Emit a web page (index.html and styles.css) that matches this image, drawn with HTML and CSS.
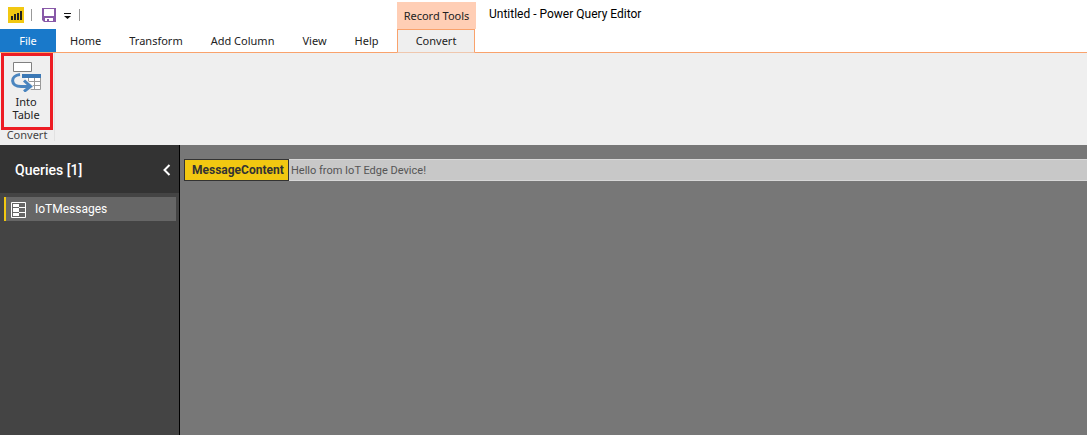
FILE: index.html
```html
<!DOCTYPE html>
<html lang="en">
<head>
<meta charset="utf-8">
<title>Untitled - Power Query Editor</title>
<link rel="stylesheet" href="styles.css">
</head>
<body>
<div class="app">
  <header class="header">
    <div class="header-main">
      <div class="quick-bar">
        <svg class="logo" width="16" height="16" viewBox="0 0 16 16" aria-hidden="true">
          <path fill="#f2c811" d="M0 0h16v16H0z"/>
          <path fill="#222" d="M3 9h2v4H3zM6 7h2v6H6zM9 6h2v7H9zM12 4h2v9h-2z"/>
        </svg>
        <span class="divider"></span>
        <button class="icon-button save" type="button" aria-label="Save">
          <svg width="14" height="14" viewBox="0 0 14 14">
            <path fill="#8859a8" d="M0 0h14v14H2l-2-2z"/>
            <path fill="#fff" d="M2 1h10v7H2zM3 10h8v3H3z"/>
            <path fill="#8859a8" d="M5 11h2v2H5z"/>
          </svg>
        </button>
        <button class="icon-button more" type="button" aria-label="Customize toolbar">
          <svg width="7" height="6" viewBox="0 0 7 6">
            <path fill="#111" d="M0 0h7v1H0zM0 3h7L3.500 6z"/>
          </svg>
        </button>
        <span class="divider"></span>
      </div>
      <nav class="tabs">
        <button class="tab tab-file" type="button">File</button>
        <button class="tab" type="button">Home</button>
        <button class="tab" type="button">Transform</button>
        <button class="tab" type="button">Add Column</button>
        <button class="tab" type="button">View</button>
        <button class="tab" type="button">Help</button>
      </nav>
    </div>
    <div class="context">
      <div class="context-title">Record Tools</div>
      <button class="tab tab-active" type="button">Convert</button>
    </div>
    <h1 class="window-title">Untitled - Power Query Editor</h1>
  </header>

  <section class="ribbon">
    <div class="ribbon-group">
      <button class="ribbon-button" type="button">
        <svg width="32" height="32" viewBox="1 0 32 32" aria-hidden="true">
          <path fill="#fff" stroke="#808080" d="M3.500 2.500h18v9h-18z"/>
          <path fill="#fff" stroke="#999" d="M12.500 14.500h18v15h-18z"/>
          <path fill="none" stroke="#999" d="M12 21.500h18M12 25.500h18M18.500 18v12M24.500 18v12"/>
          <path fill="#3b78b5" d="M12 14h19v4H12z"/>
          <path fill="#efefef" d="M10 13h2v5h3l9 8.500-6 5.500h-6l-6-6z"/>
          <path fill="none" stroke="#4a85bf" stroke-width="3" d="M10 14.500C0 15.500 0 26.500 11 26.500h9"/>
          <path fill="none" stroke="#4a85bf" stroke-width="3" d="M14 20.500l6.500 6-6.500 5"/>
        </svg>
        <span>Into<br>Table</span>
      </button>
      <div class="group-label">Convert</div>
    </div>
  </section>

  <div class="workspace">
    <aside class="queries">
      <div class="queries-header">
        <h2 class="queries-title">Queries [1]</h2>
        <button class="icon-button" type="button" aria-label="Collapse queries">
          <svg width="8" height="12" viewBox="0 0 8 12"><path fill="none" stroke="#fff" stroke-width="2" d="M6.500 1L1.500 6l5 5"/></svg>
        </button>
      </div>
      <button class="query" type="button">
        <svg width="15" height="16" viewBox="0 0 15 16" aria-hidden="true">
          <path fill="none" stroke="#fff" d="M.5.5h14v15H.5zM8 5.500h6M8 10.500h6"/>
          <path fill="#fff" d="M2 2h6v3H2zM2 6h6v4H2zM2 11h6v3H2z"/>
          <path fill="#666" d="M2 5h6v1H2zM2 10h6v1H2z"/>
        </svg>
        <span>IoTMessages</span>
      </button>
    </aside>
    <main class="content">
      <table class="record">
        <tr><th scope="row">MessageContent</th><td>Hello from IoT Edge Device!</td></tr>
      </table>
    </main>
  </div>
</div>
</body>
</html>
```
FILE: styles.css
```css
* { box-sizing: border-box; }
body {
  margin: 0;
  font: 11px/13px Roboto, "Open Sans", sans-serif;
  color: #222;
  background: #fff;
}
button {
  margin: 0;
  padding: 0;
  border: 0;
  background: none;
  font: inherit;
  color: inherit;
}
svg { display: block; }
.app { display: flex; flex-direction: column; min-height: 100vh; }

.header { display: flex; height: 53px; border-bottom: 1px solid #f9a26c; }
.header-main { width: 397px; }
.quick-bar { display: flex; align-items: center; height: 29px; padding: 0 8px; }
.divider { width: 1px; height: 12px; background: #999; }
.logo + .divider { margin-left: 7px; }
.save { margin: 0 8px 0 10px; }
.more { margin: 2px 8px 0 0; }

.tabs { display: flex; height: 23px; }
.tab {
  height: 23px;
  padding: 0 14px 1px;
  font-family: "Noto Sans", "Open Sans", sans-serif;
  white-space: nowrap;
}
.tab-file { width: 56px; background: #1979ca; color: #fff; }
.context { width: 79px; padding-top: 2px; font-family: "Noto Sans", "Open Sans", sans-serif; }
.context-title {
  height: 27px;
  background: #ffceb5;
  line-height: 28px;
  text-align: center;
  white-space: nowrap;
}
.tab-active {
  width: 78px;
  height: 24px;
  border: 1px solid #f9a26c;
  border-bottom-color: #efc7ae;
  background: #efefef;
}
.window-title { margin: 0 0 0 13px; font-size: 12px; font-weight: 400; line-height: 28px; color: #000; }

.ribbon { display: flex; height: 92px; background: #efefef; }
.ribbon-group {
  width: 55px;
  height: 88px;
  border-right: 1px solid #e2e2e2;
  font-family: "Noto Sans", "Open Sans", sans-serif;
}
.ribbon-button {
  display: flex;
  flex-direction: column;
  align-items: center;
  gap: 3px;
  width: 52px;
  height: 77px;
  padding-top: 4px;
  margin-left: 1px;
  border: 3px solid #ed1c24;
}
.ribbon-button span { margin-right: 2px; }
.group-label { text-align: center; line-height: 10px; color: #444; }

.workspace { display: flex; flex: 1; background: #777; }
.queries { width: 180px; border-right: 1px solid #000; background: #444; color: #fff; }
.queries-header {
  display: flex;
  align-items: center;
  justify-content: space-between;
  height: 48px;
  padding: 2px 8px 0 15px;
  background: #333;
}
.queries-title { margin: 0; font-size: 14px; font-weight: 500; line-height: 18px; }
.query {
  display: flex;
  align-items: center;
  gap: 9px;
  width: 172px;
  height: 24px;
  margin: 4px 0 0 4px;
  padding: 1px 0 0 5px;
  border-left: 2px solid #f2c811;
  background: #666;
  font-size: 12px;
}
.content { flex: 1; min-width: 0; padding: 14px 0 0 4px; }
.record { width: 100%; border-collapse: separate; border-spacing: 0; }
.record th {
  width: 105px;
  height: 22px;
  padding: 1px 2px 0 7px;
  border: 1px solid #333;
  background: #f2c811;
  font-size: 12px;
  font-weight: 700;
  text-align: left;
  color: #333;
}
.record td {
  padding: 0 2px;
  border: solid #d8d8d8;
  border-width: 1px 0;
  background: #c8c8c8;
  color: #555;
}
```
